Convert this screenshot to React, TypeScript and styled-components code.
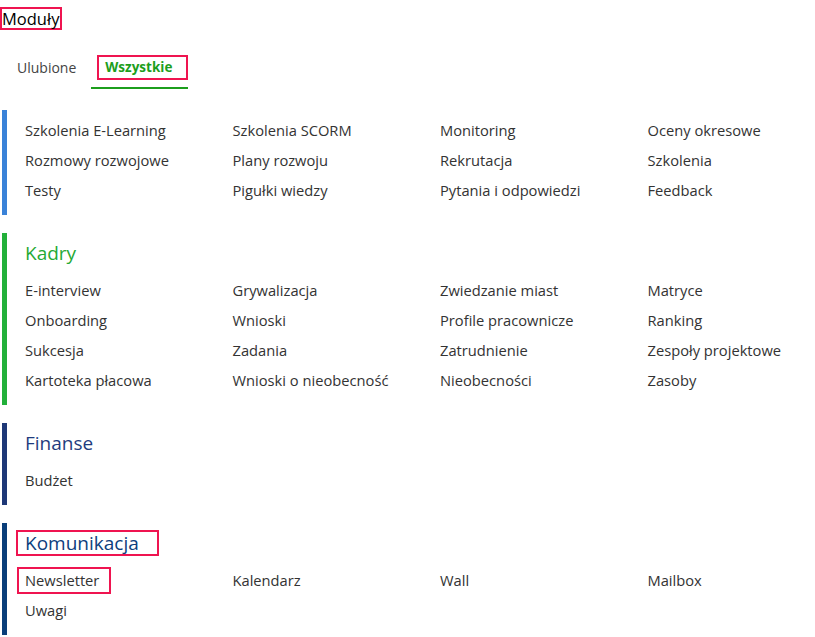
import React from 'react';
import styled, { createGlobalStyle } from 'styled-components';

const GlobalStyle = createGlobalStyle`
  body {
    margin: 0;
    background: #ffffff;
    font-family: "Open Sans", Lato, sans-serif;
    color: #333333;
  }
`;

const Page = styled.div`
  padding-top: 7px;
`;

const Marked = styled.span`
  display: inline-block;
  border: 2px solid #ef1450;
  padding-right: 1px;
`;

const PageTitle = styled.h1`
  margin: 0;
  font-size: 16.5px;
  line-height: 19px;
  font-weight: 400;
  color: #000000;
`;

const Tabs = styled.div`
  display: flex;
  gap: 13px;
  margin: 25px 0 0 9px;
`;

const Tab = styled.div<{ $active?: boolean }>`
  padding: 0 0 7px 6px;
  border-bottom: 2px solid ${(p) => (p.$active ? '#1c9e1c' : 'transparent')};
  font-size: ${(p) => (p.$active ? '13.5px' : '14px')};
  font-weight: ${(p) => (p.$active ? 700 : 400)};
  color: ${(p) => (p.$active ? '#1c9e1c' : '#444444')};
`;

const TabLabel = styled.span<{ $boxed?: boolean }>`
  display: inline-block;
  height: 21px;
  line-height: 21px;
  padding: 0 ${(p) => (p.$boxed ? '14px' : '0')} 0 ${(p) => (p.$boxed ? '6px' : '0')};
  border: 2px solid ${(p) => (p.$boxed ? '#ef1450' : 'transparent')};
`;

const Sections = styled.div`
  display: flex;
  flex-direction: column;
  gap: 18px;
  margin-top: 21px;
`;

const Section = styled.section<{ $bar: string }>`
  margin-left: 2px;
  border-left: 5px solid ${(p) => p.$bar};
  padding: 5px 0 10px 10px;
`;

const SectionTitle = styled.h2<{ $color: string }>`
  margin: 0 0 7px 0;
  height: 30px;
  display: flex;
  align-items: center;
  font-size: 19px;
  font-weight: 400;
  color: ${(p) => p.$color};
`;

const TitleText = styled.span<{ $boxed?: boolean }>`
  display: inline-block;
  line-height: 22px;
  padding: 0 ${(p) => (p.$boxed ? '18px' : '2px')} 0 7px;
  margin-left: -1px;
  border: 2px solid ${(p) => (p.$boxed ? '#ef1450' : 'transparent')};
`;

const Grid = styled.div`
  display: grid;
  grid-template-columns: repeat(4, 207.5px);
`;

const Item = styled.div`
  height: 30px;
  display: flex;
  align-items: center;
  font-size: 14.7px;
  color: #333333;
  white-space: nowrap;
`;

const ItemText = styled.span<{ $boxed?: boolean }>`
  display: inline-block;
  line-height: 23px;
  padding: 0 ${(p) => (p.$boxed ? '10px' : '2px')} 0 6px;
  border: 2px solid ${(p) => (p.$boxed ? '#ef1450' : 'transparent')};
`;

type Group = {
  title?: string;
  color: string;
  bar: string;
  boxedTitle?: boolean;
  boxedItem?: string;
  items: string[];
};

const groups: Group[] = [
  {
    color: '#333333',
    bar: '#3a82d8',
    items: [
      'Szkolenia E-Learning', 'Szkolenia SCORM', 'Monitoring', 'Oceny okresowe',
      'Rozmowy rozwojowe', 'Plany rozwoju', 'Rekrutacja', 'Szkolenia',
      'Testy', 'Pigułki wiedzy', 'Pytania i odpowiedzi', 'Feedback',
    ],
  },
  {
    title: 'Kadry',
    color: '#25a935',
    bar: '#22b03a',
    items: [
      'E-interview', 'Grywalizacja', 'Zwiedzanie miast', 'Matryce',
      'Onboarding', 'Wnioski', 'Profile pracownicze', 'Ranking',
      'Sukcesja', 'Zadania', 'Zatrudnienie', 'Zespoły projektowe',
      'Kartoteka płacowa', 'Wnioski o nieobecność', 'Nieobecności', 'Zasoby',
    ],
  },
  {
    title: 'Finanse',
    color: '#1f3c7e',
    bar: '#1e3877',
    items: ['Budżet'],
  },
  {
    title: 'Komunikacja',
    color: '#0d407d',
    bar: '#0a3e7a',
    boxedTitle: true,
    boxedItem: 'Newsletter',
    items: ['Newsletter', 'Kalendarz', 'Wall', 'Mailbox', 'Uwagi'],
  },
];

export default function App() {
  return (
    <Page>
      <GlobalStyle />
      <Marked>
        <PageTitle>Moduły</PageTitle>
      </Marked>

      <Tabs>
        <Tab>
          <TabLabel>Ulubione</TabLabel>
        </Tab>
        <Tab $active>
          <TabLabel $boxed>Wszystkie</TabLabel>
        </Tab>
      </Tabs>

      <Sections>
        {groups.map((g, i) => (
          <Section key={i} $bar={g.bar}>
            {g.title && (
              <SectionTitle $color={g.color}>
                <TitleText $boxed={g.boxedTitle}>{g.title}</TitleText>
              </SectionTitle>
            )}
            <Grid>
              {g.items.map((item) => (
                <Item key={item}>
                  <ItemText $boxed={item === g.boxedItem}>{item}</ItemText>
                </Item>
              ))}
            </Grid>
          </Section>
        ))}
      </Sections>
    </Page>
  );
}
